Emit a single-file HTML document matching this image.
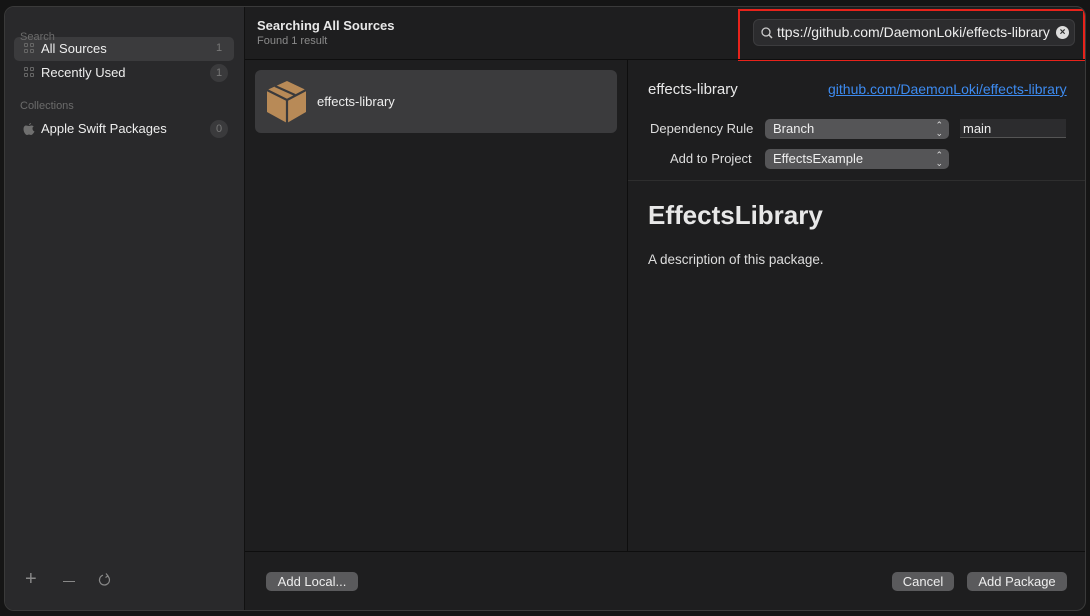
<!DOCTYPE html>
<html><head><meta charset="utf-8"><style>
*{box-sizing:border-box;margin:0;padding:0}
body{width:1090px;height:616px;background:#151515;font-family:"Liberation Sans",sans-serif;color:#e6e6e6;position:relative;overflow:hidden;font-size:13px}
.win{position:absolute;left:4px;top:6px;width:1082px;height:605px;border-radius:10px;background:#1e1e1f;border:1px solid #3a3a3a;overflow:hidden}
.side{position:absolute;left:0;top:0;width:240px;height:100%;background:#29292b;border-right:1px solid #111}
.abs{position:absolute;white-space:nowrap}
.sec{color:#6b6b6b;font-size:11px}
.row{position:absolute;left:10px;width:220px;height:24px;border-radius:5px}
.badge{position:absolute;width:18px;height:18px;border-radius:9px;background:#3a3a3c;color:#777;font-size:11px;text-align:center;line-height:18px}
.grid{position:absolute;width:11px;height:11px}
.grid i{position:absolute;width:4px;height:4px;border:1px solid #666;border-radius:1px}
.hline{position:absolute;height:1px;background:#0e0e0e}
.btn{position:absolute;height:19px;border-radius:5px;background:#5a5a5c;color:#eee;font-size:13px;text-align:center;line-height:19px}
.pop{position:absolute;height:20px;border-radius:5px;background:#555557;color:#eee;padding-left:8px;line-height:20px;font-size:13px}
.pop .ar{position:absolute;right:6px;top:2px;font-size:9px;line-height:8px;color:#ddd}
</style></head><body>
<div class="win">
 <div class="side">
  <div class="row" style="left:9px;top:30px;background:#3b3b3d"></div>
  <div class="abs sec" style="left:15px;top:24px;font-size:11px">Search</div>
  <div class="grid" style="left:19px;top:36px"><i style="left:0;top:0"></i><i style="left:6px;top:0"></i><i style="left:0;top:6px"></i><i style="left:6px;top:6px"></i></div>
  <div class="abs" style="left:36px;top:34px;color:#eee">All Sources</div>
  <div class="abs" style="left:211px;top:35px;color:#777;font-size:11px">1</div>
  <div class="grid" style="left:19px;top:60px"><i style="left:0;top:0"></i><i style="left:6px;top:0"></i><i style="left:0;top:6px"></i><i style="left:6px;top:6px"></i></div>
  <div class="abs" style="left:36px;top:58px;color:#eee">Recently Used</div>
  <div class="badge" style="left:205px;top:57px">1</div>
  <div class="abs sec" style="left:15px;top:93px">Collections</div>
  <svg class="abs" style="left:18px;top:115px" width="12" height="14" viewBox="0 0 12 14"><path d="M8 1C7 1 6 2 6 3 7 3 8 2 8 1ZM6 4C5 4 4 3.5 3 3.5 1.5 3.5 0.5 5 0.5 7 0.5 10 2.5 13 4 13 5 13 5 12.5 6 12.5 7 12.5 7 13 8 13 9.5 13 11 10.5 11.5 9.5 10 9 9.5 7.5 9.5 6.5 9.5 5.5 10 4.8 10.8 4.3 10 3.8 9 3.5 8.5 3.5 7.5 3.5 7 4 6 4Z" fill="#6f6f6f"/></svg>
  <div class="abs" style="left:36px;top:114px;color:#eee">Apple Swift Packages</div>
  <div class="badge" style="left:205px;top:113px">0</div>
  <div class="abs" style="left:20px;top:561px;color:#888;font-size:20px;font-weight:300">+</div>
  <div class="abs" style="left:58px;top:574px;width:12px;height:1px;background:#888"></div>
  <svg class="abs" style="left:93px;top:566px" width="14" height="14" viewBox="0 0 14 14"><path d="M9.5 3A5 5 0 1 1 5 2.2" fill="none" stroke="#888" stroke-width="1.2"/><path d="M8 0.5L10 3 7.5 4.5" fill="none" stroke="#888" stroke-width="1.2"/></svg>
 </div>
 <div class="abs" style="left:252px;top:11px;font-weight:bold;font-size:13px;color:#e8e8e8">Searching All Sources</div>
 <div class="abs" style="left:252px;top:28px;font-size:11px;color:#8a8a8a">Found 1 result</div>
 <div style="position:absolute;left:733px;top:2px;width:347px;height:52px;border:2px solid #e8231b"></div>
 <div style="position:absolute;left:748px;top:12px;width:322px;height:27px;border-radius:6px;background:#2c2c2e;border:1px solid #3c3c3e"></div>
 <svg class="abs" style="left:756px;top:20px" width="12" height="12" viewBox="0 0 12 12"><circle cx="5" cy="5" r="4" fill="none" stroke="#ccc" stroke-width="1.3"/><path d="M8 8L11 11" stroke="#ccc" stroke-width="1.5"/></svg>
 <div class="abs" style="left:772px;top:17px;font-size:14px;color:#eee">ttps://github.com/DaemonLoki/effects-library</div>
 <div class="abs" style="left:1051px;top:19px;width:13px;height:13px;border-radius:7px;background:#ddd;color:#2a2a2a;font-size:10px;line-height:13px;text-align:center;font-weight:bold">×</div>
 <div class="hline" style="left:240px;top:52px;width:842px"></div>
 <div style="position:absolute;left:622px;top:53px;width:1px;height:491px;background:#0e0e0e"></div>
 <div style="position:absolute;left:250px;top:63px;width:362px;height:63px;border-radius:6px;background:#3b3b3d"></div>
 <svg class="abs" style="left:261px;top:73px" width="42" height="44" viewBox="0 0 42 44"><path d="M21 1L40 10V32L21 43L1 32V10Z" fill="#b88a57"/><path d="M1 10L21 20L40 10M21 20V43M9 6L29 15" fill="none" stroke="#3a3a3c" stroke-width="2.2"/></svg>
 <div class="abs" style="left:312px;top:87px;font-size:13px;color:#eee">effects-library</div>
 <div class="abs" style="left:643px;top:74px;font-size:15px;color:#e8e8e8">effects-library</div>
 <div class="abs" style="left:823px;top:74px;font-size:14px;color:#3d8bf0;text-decoration:underline">github.com/DaemonLoki/effects-library</div>
 <div class="abs" style="left:645px;top:114px;color:#ddd">Dependency Rule</div>
 <div class="pop" style="left:760px;top:112px;width:184px">Branch<span class="ar">⌃<br>⌄</span></div>
 <div class="abs" style="left:955px;top:112px;width:106px;height:19px;background:#2c2c2e;border-bottom:1px solid #555;padding-left:3px;line-height:19px;color:#eee">main</div>
 <div class="abs" style="left:665px;top:144px;color:#ddd">Add to Project</div>
 <div class="pop" style="left:760px;top:142px;width:184px">EffectsExample<span class="ar">⌃<br>⌄</span></div>
 <div class="hline" style="left:623px;top:173px;width:459px;background:#2e2e2e"></div>
 <div class="abs" style="left:643px;top:193px;font-size:26px;font-weight:bold;color:#e8e8e8">EffectsLibrary</div>
 <div class="abs" style="left:643px;top:245px;font-size:13.5px;color:#ddd">A description of this package.</div>
 <div class="hline" style="left:240px;top:544px;width:842px"></div>
 <div class="btn" style="left:261px;top:565px;width:92px">Add Local...</div>
 <div class="btn" style="left:887px;top:565px;width:62px">Cancel</div>
 <div class="btn" style="left:962px;top:565px;width:100px">Add Package</div>
</div>
</body></html>
